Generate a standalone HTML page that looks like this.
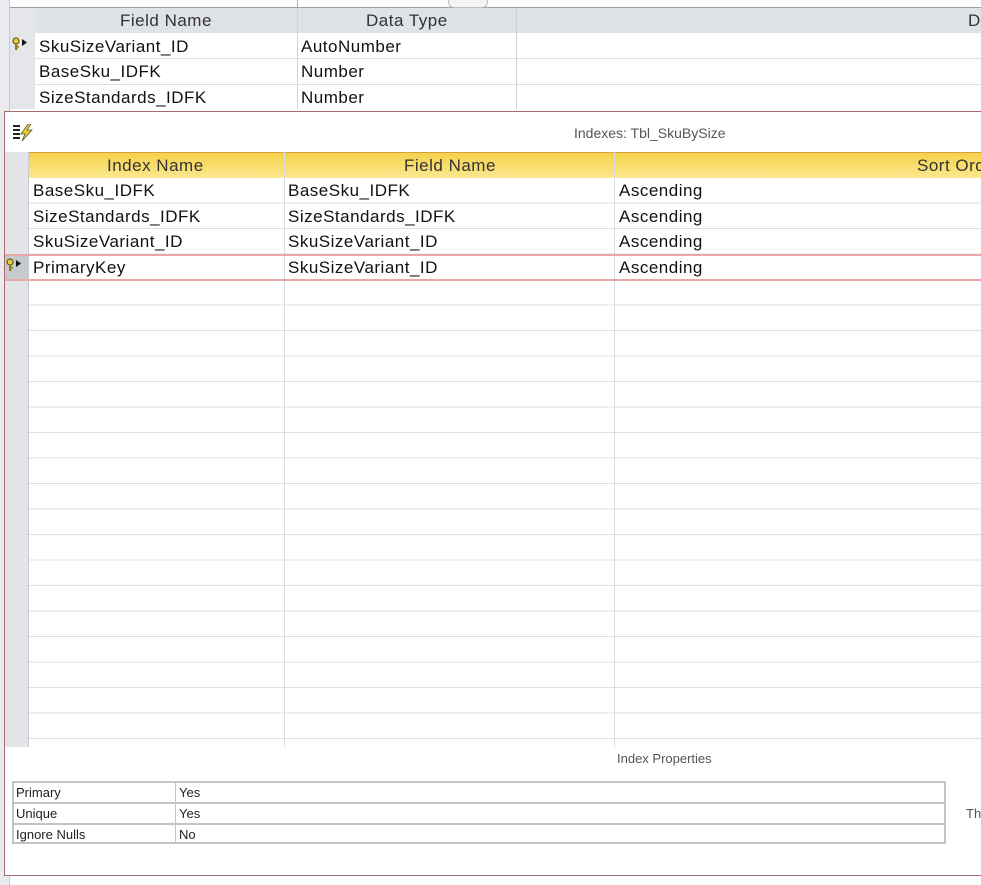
<!DOCTYPE html>
<html><head><meta charset="utf-8"><style>
*{margin:0;padding:0;box-sizing:border-box}
body{width:981px;height:885px;overflow:hidden;background:#fff;font-family:"Liberation Sans",sans-serif;position:relative}
.a{position:absolute;white-space:nowrap}
.t{font-size:17px;letter-spacing:0.5px;color:#111}
</style></head><body>
<div class="a" style="left:0;top:0;width:10px;height:885px;background:#e9ebee;border-right:1px solid #c8ccd2"></div>
<div class="a" style="left:10px;top:0;width:971px;height:8px;background:#fdfdfd;border-bottom:1px solid #9aa0a8"></div>
<div class="a" style="left:297px;top:0;width:1px;height:8px;background:#aaa"></div>
<div class="a" style="left:448px;top:-4px;width:40px;height:12px;border:1px solid #bbb;border-radius:6px;background:#f4f4f4"></div>
<div class="a" style="left:10px;top:8px;width:971px;height:25px;background:#dfe2e6"></div>
<div class="a" style="left:10px;top:8px;width:25px;height:101px;background:#e4e6ea"></div>
<div class="a t" style="left:120px;top:11px;color:#333">Field Name</div>
<div class="a t" style="left:366px;top:11px;color:#333">Data Type</div>
<div class="a t" style="left:968px;top:11px;color:#333">D</div>
<div class="a" style="left:297px;top:8px;width:1px;height:101px;background:#d0d3d8"></div>
<div class="a" style="left:516px;top:8px;width:1px;height:101px;background:#d0d3d8"></div>
<div class="a" style="left:35px;top:58px;width:946px;height:1px;background:#dcdfe3"></div>
<div class="a" style="left:35px;top:84px;width:946px;height:1px;background:#dcdfe3"></div>
<svg class="a" style="left:12px;top:37px" width="18" height="14" viewBox="0 0 18 14"><circle cx="4" cy="4" r="3" fill="#e8d040" stroke="#6a5a10" stroke-width="1.2"/><rect x="3" y="6" width="2.4" height="7" fill="#8a7a20"/><rect x="5" y="9" width="2" height="1.5" fill="#8a7a20"/><path d="M10 2 L15 5.5 L10 9 Z" fill="#111"/></svg>
<div class="a t" style="left:39px;top:37px">SkuSizeVariant_ID</div>
<div class="a t" style="left:301px;top:37px">AutoNumber</div>
<div class="a t" style="left:39px;top:62px">BaseSku_IDFK</div>
<div class="a t" style="left:301px;top:62px">Number</div>
<div class="a t" style="left:39px;top:88px">SizeStandards_IDFK</div>
<div class="a t" style="left:301px;top:88px">Number</div>
<div class="a" style="left:4px;top:111px;width:980px;height:765px;border:1px solid #a86a6a;background:#fff"></div>
<svg class="a" style="left:13px;top:124px" width="24" height="18" viewBox="0 0 24 18"><g fill="#222"><rect x="0" y="1" width="7" height="2"/><rect x="0" y="5" width="7" height="2"/><rect x="0" y="9" width="7" height="2"/><rect x="0" y="13" width="7" height="2"/></g><path d="M15 0 L8 10 L12 10 L9 17 L19 6 L14 6 L18 0 Z" fill="#e8d020" stroke="#555" stroke-width="0.8"/></svg>
<div class="a" style="left:574px;top:125px;font-size:14px;color:#555">Indexes: Tbl_SkuBySize</div>
<div class="a" style="left:5px;top:152px;width:24px;height:595px;background:#e2e4e8;border-right:1px solid #c8ccd2"></div>
<div class="a" style="left:29px;top:152px;width:952px;height:26px;background:linear-gradient(#f5d24a,#fbe78f);border-top:1px solid #d8a040"></div>
<div class="a t" style="left:107px;top:156px;color:#333">Index Name</div>
<div class="a t" style="left:404px;top:156px;color:#333">Field Name</div>
<div class="a t" style="left:917px;top:156px;color:#333">Sort Ord</div>
<div class="a" style="left:29px;top:178px;width:952px;height:562px;background:repeating-linear-gradient(to bottom,transparent 0,transparent 24.5px,#dcdfe3 24.5px,#dcdfe3 25.5px)"></div>
<div class="a" style="left:284px;top:152px;width:1px;height:595px;background:#d8dbe0"></div>
<div class="a" style="left:614px;top:152px;width:1px;height:595px;background:#d8dbe0"></div>
<div class="a" style="left:5px;top:254px;width:976px;height:27px;border-top:2px solid #e8a8a8;border-bottom:2px solid #e8a8a8"></div>
<div class="a" style="left:5px;top:256px;width:24px;height:23px;background:#c6c9ce"></div>
<svg class="a" style="left:6px;top:258px" width="18" height="14" viewBox="0 0 18 14"><circle cx="4" cy="4" r="3" fill="#e8d040" stroke="#6a5a10" stroke-width="1.2"/><rect x="3" y="6" width="2.4" height="7" fill="#8a7a20"/><rect x="5" y="9" width="2" height="1.5" fill="#8a7a20"/><path d="M10 2 L15 5.5 L10 9 Z" fill="#111"/></svg>
<div class="a t" style="left:33px;top:181px">BaseSku_IDFK</div>
<div class="a t" style="left:288px;top:181px">BaseSku_IDFK</div>
<div class="a t" style="left:619px;top:181px">Ascending</div>
<div class="a t" style="left:33px;top:207px">SizeStandards_IDFK</div>
<div class="a t" style="left:288px;top:207px">SizeStandards_IDFK</div>
<div class="a t" style="left:619px;top:207px">Ascending</div>
<div class="a t" style="left:33px;top:232px">SkuSizeVariant_ID</div>
<div class="a t" style="left:288px;top:232px">SkuSizeVariant_ID</div>
<div class="a t" style="left:619px;top:232px">Ascending</div>
<div class="a t" style="left:33px;top:258px">PrimaryKey</div>
<div class="a t" style="left:288px;top:258px">SkuSizeVariant_ID</div>
<div class="a t" style="left:619px;top:258px">Ascending</div>
<div class="a" style="left:617px;top:751px;font-size:13px;color:#555">Index Properties</div>
<div class="a" style="left:12px;top:781px;width:934px;height:63px;border:2px solid #c4c4c4;background:#fff"></div>
<div class="a" style="left:13px;top:802px;width:932px;height:2px;background:#c4c4c4"></div>
<div class="a" style="left:13px;top:823px;width:932px;height:2px;background:#c4c4c4"></div>
<div class="a" style="left:175px;top:782px;width:1px;height:61px;background:#c4c4c4"></div>
<div class="a" style="left:16px;top:785px;font-size:13px;color:#222">Primary</div>
<div class="a" style="left:179px;top:785px;font-size:13px;color:#222">Yes</div>
<div class="a" style="left:16px;top:806px;font-size:13px;color:#222">Unique</div>
<div class="a" style="left:179px;top:806px;font-size:13px;color:#222">Yes</div>
<div class="a" style="left:16px;top:827px;font-size:13px;color:#222">Ignore Nulls</div>
<div class="a" style="left:179px;top:827px;font-size:13px;color:#222">No</div>
<div class="a" style="left:966px;top:806px;font-size:13px;color:#555">Th</div>
</body></html>
